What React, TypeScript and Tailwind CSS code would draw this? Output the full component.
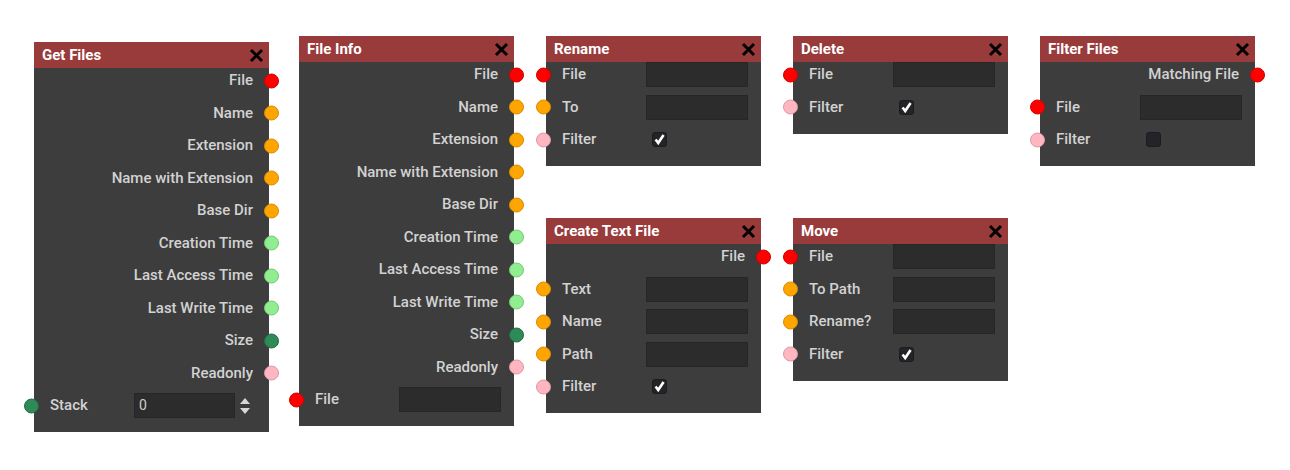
import React from "react";

type PortColor = "red" | "orange" | "lgreen" | "dgreen" | "pink";

const portClass: Record<PortColor, string> = {
  red: "bg-[#ff0000] border-[#d40000]",
  orange: "bg-[#ffa500] border-[#d88c00]",
  lgreen: "bg-[#90ee90] border-[#76c876]",
  dgreen: "bg-[#2e8b57] border-[#236b43]",
  pink: "bg-[#ffb6c1] border-[#d89aa4]",
};

type Row =
  | { kind: "out"; label: string; color: PortColor }
  | { kind: "in"; label: string; color: PortColor; control?: "text" | "check" | "uncheck" | "number" };

function Port({ color, side }: { color: PortColor; side: "left" | "right" }) {
  return (
    <span
      className={`absolute top-1/2 -translate-y-1/2 w-[15px] h-[15px] rounded-full border ${portClass[color]} ${
        side === "left" ? "left-[-10px]" : "right-[-10px]"
      }`}
    />
  );
}

function CloseX() {
  return (
    <svg width="15" height="15" viewBox="0 0 15 15">
      <path d="M2 2 L13 13 M13 2 L2 13" stroke="#000" strokeWidth="3" strokeLinecap="butt" />
    </svg>
  );
}

function Check({ checked }: { checked: boolean }) {
  return (
    <span className="ml-[6px] w-[15px] h-[15px] rounded-[3px] bg-[#242428] border border-[#1c1c1f] flex items-center justify-center">
      {checked && (
        <svg width="15" height="15" viewBox="0 0 15 15">
          <path d="M3 7.5 L6 11.5 L12.2 2.2" stroke="#fff" strokeWidth="3" fill="none" strokeLinejoin="miter" />
        </svg>
      )}
    </span>
  );
}

function Node({
  title,
  left,
  top,
  width,
  rows,
}: {
  title: string;
  left: number;
  top: number;
  width: number;
  rows: Row[];
}) {
  return (
    <div className="absolute bg-[#3d3d3d]" style={{ left, top, width }}>
      <div className="h-[26px] bg-[#993a3b] flex items-center justify-between pl-2 pr-[5px]">
        <span className="text-white font-bold text-[15px] leading-none">{title}</span>
        <CloseX />
      </div>
      <div className="flex flex-col gap-[7.5px] pb-[14px]">
        {rows.map((r, i) => (
          <div key={i} className="relative h-[25px] flex items-center text-[15px] font-medium text-[#d2d2d2]">
            {r.kind === "out" ? (
              <>
                <span className="ml-auto pr-4">{r.label}</span>
                <Port color={r.color} side="right" />
              </>
            ) : (
              <>
                <Port color={r.color} side="left" />
                <span className="w-[100px] shrink-0 pl-4">{r.label}</span>
                {r.control === "text" && (
                  <span className="w-[102px] h-[25px] bg-[#2c2c2c] border border-[#262626]" />
                )}
                {r.control === "check" && <Check checked />}
                {r.control === "uncheck" && <Check checked={false} />}
                {r.control === "number" && (
                  <>
                    <span className="w-[101px] h-[25px] bg-[#2c2c2c] border border-[#262626] flex items-center pl-1 text-[14px] font-normal text-[#cfcfcf]">
                      0
                    </span>
                    <svg className="ml-[4px]" width="12" height="18" viewBox="0 0 12 18">
                      <path d="M6 1 L11 7 L1 7 Z M1 11 L11 11 L6 17 Z" fill="#d8d8d8" />
                    </svg>
                  </>
                )}
              </>
            )}
          </div>
        ))}
      </div>
    </div>
  );
}

const fileOutputs: Row[] = [
  { kind: "out", label: "File", color: "red" },
  { kind: "out", label: "Name", color: "orange" },
  { kind: "out", label: "Extension", color: "orange" },
  { kind: "out", label: "Name with Extension", color: "orange" },
  { kind: "out", label: "Base Dir", color: "orange" },
  { kind: "out", label: "Creation Time", color: "lgreen" },
  { kind: "out", label: "Last Access Time", color: "lgreen" },
  { kind: "out", label: "Last Write Time", color: "lgreen" },
  { kind: "out", label: "Size", color: "dgreen" },
  { kind: "out", label: "Readonly", color: "pink" },
];

export default function App() {
  return (
    <div
      className="relative w-[1290px] h-[470px] bg-white overflow-hidden"
      style={{ fontFamily: "Roboto, 'Noto Sans', sans-serif" }}
    >
      <Node
        title="Get Files"
        left={34}
        top={42}
        width={235}
        rows={[...fileOutputs, { kind: "in", label: "Stack", color: "dgreen", control: "number" }]}
      />
      <Node
        title="File Info"
        left={299}
        top={36}
        width={215}
        rows={[...fileOutputs, { kind: "in", label: "File", color: "red", control: "text" }]}
      />
      <Node
        title="Rename"
        left={546}
        top={36}
        width={215}
        rows={[
          { kind: "in", label: "File", color: "red", control: "text" },
          { kind: "in", label: "To", color: "orange", control: "text" },
          { kind: "in", label: "Filter", color: "pink", control: "check" },
        ]}
      />
      <Node
        title="Delete"
        left={793}
        top={36}
        width={215}
        rows={[
          { kind: "in", label: "File", color: "red", control: "text" },
          { kind: "in", label: "Filter", color: "pink", control: "check" },
        ]}
      />
      <Node
        title="Filter Files"
        left={1040}
        top={36}
        width={215}
        rows={[
          { kind: "out", label: "Matching File", color: "red" },
          { kind: "in", label: "File", color: "red", control: "text" },
          { kind: "in", label: "Filter", color: "pink", control: "uncheck" },
        ]}
      />
      <Node
        title="Create Text File"
        left={546}
        top={218}
        width={215}
        rows={[
          { kind: "out", label: "File", color: "red" },
          { kind: "in", label: "Text", color: "orange", control: "text" },
          { kind: "in", label: "Name", color: "orange", control: "text" },
          { kind: "in", label: "Path", color: "orange", control: "text" },
          { kind: "in", label: "Filter", color: "pink", control: "check" },
        ]}
      />
      <Node
        title="Move"
        left={793}
        top={218}
        width={215}
        rows={[
          { kind: "in", label: "File", color: "red", control: "text" },
          { kind: "in", label: "To Path", color: "orange", control: "text" },
          { kind: "in", label: "Rename?", color: "orange", control: "text" },
          { kind: "in", label: "Filter", color: "pink", control: "check" },
        ]}
      />
    </div>
  );
}
